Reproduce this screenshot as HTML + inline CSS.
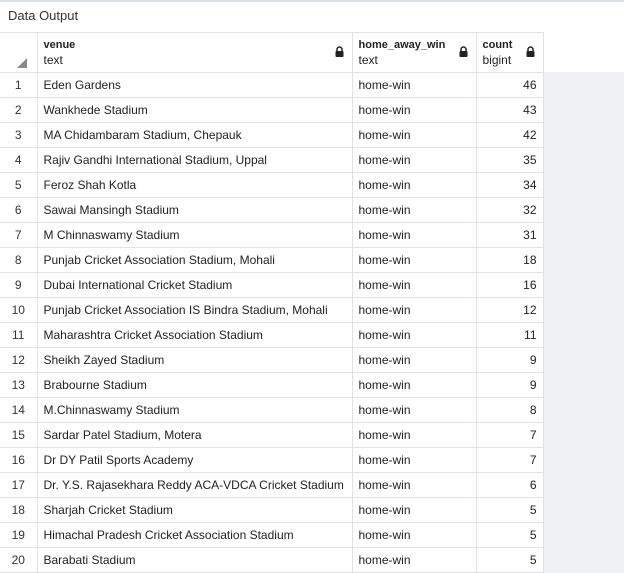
<!DOCTYPE html>
<html><head><style>
body{margin:0;width:624px;height:573px;background:#fff;font-family:"Liberation Sans",sans-serif;font-size:12px;color:#222;overflow:hidden;position:relative}
.top{position:absolute;left:0;top:0;width:624px;height:2px;background:#dde0e6}
.title{position:absolute;left:8px;top:8px;font-size:13px;color:#333}
.gray{position:absolute;left:543px;top:72px;width:81px;height:501px;background:#eef0f4}
table{position:absolute;left:0;top:32px;border-collapse:collapse;table-layout:fixed}
td,th{border:1px solid #dfe2e8;padding:0 6px;white-space:nowrap;overflow:hidden}
th{height:39px;text-align:left;font-weight:normal;vertical-align:middle;position:relative;line-height:15px}
th b{font-weight:bold;font-size:11px;color:#222}
td{height:24px}
td.n{text-align:center;color:#333}
td.c{text-align:right;padding-right:6px}
tr td:first-child,tr th:first-child{border-left:none}
.lock{position:absolute;right:8px;top:15px;width:9px;height:9px}
.tri{position:absolute;left:17px;bottom:4px;width:0;height:0;border-left:10px solid transparent;border-bottom:10px solid #888}
</style></head><body>
<div class="top"></div>
<div class="title">Data Output</div>
<div class="gray"></div>
<table>
<colgroup><col style="width:37px"><col style="width:315px"><col style="width:124px"><col style="width:67px"></colgroup>
<tr><th><div class="tri"></div></th>
<th><b>venue</b><br>text<svg class="lock" viewBox="0 0 9 11" style="height:11px;top:13px"><path d="M2 5V3.5a2.5 2.5 0 0 1 5 0V5" fill="none" stroke="#222" stroke-width="1.5"/><rect x="0.5" y="5" width="8" height="6" rx="1" fill="#222"/></svg></th>
<th><b>home_away_win</b><br>text<svg class="lock" viewBox="0 0 9 11" style="height:11px;top:13px"><path d="M2 5V3.5a2.5 2.5 0 0 1 5 0V5" fill="none" stroke="#222" stroke-width="1.5"/><rect x="0.5" y="5" width="8" height="6" rx="1" fill="#222"/></svg></th>
<th><b>count</b><br>bigint<svg class="lock" viewBox="0 0 9 11" style="height:11px;top:13px"><path d="M2 5V3.5a2.5 2.5 0 0 1 5 0V5" fill="none" stroke="#222" stroke-width="1.5"/><rect x="0.5" y="5" width="8" height="6" rx="1" fill="#222"/></svg></th></tr>
<tr><td class="n">1</td><td>Eden Gardens</td><td>home-win</td><td class="c">46</td></tr>
<tr><td class="n">2</td><td>Wankhede Stadium</td><td>home-win</td><td class="c">43</td></tr>
<tr><td class="n">3</td><td>MA Chidambaram Stadium, Chepauk</td><td>home-win</td><td class="c">42</td></tr>
<tr><td class="n">4</td><td>Rajiv Gandhi International Stadium, Uppal</td><td>home-win</td><td class="c">35</td></tr>
<tr><td class="n">5</td><td>Feroz Shah Kotla</td><td>home-win</td><td class="c">34</td></tr>
<tr><td class="n">6</td><td>Sawai Mansingh Stadium</td><td>home-win</td><td class="c">32</td></tr>
<tr><td class="n">7</td><td>M Chinnaswamy Stadium</td><td>home-win</td><td class="c">31</td></tr>
<tr><td class="n">8</td><td>Punjab Cricket Association Stadium, Mohali</td><td>home-win</td><td class="c">18</td></tr>
<tr><td class="n">9</td><td>Dubai International Cricket Stadium</td><td>home-win</td><td class="c">16</td></tr>
<tr><td class="n">10</td><td>Punjab Cricket Association IS Bindra Stadium, Mohali</td><td>home-win</td><td class="c">12</td></tr>
<tr><td class="n">11</td><td>Maharashtra Cricket Association Stadium</td><td>home-win</td><td class="c">11</td></tr>
<tr><td class="n">12</td><td>Sheikh Zayed Stadium</td><td>home-win</td><td class="c">9</td></tr>
<tr><td class="n">13</td><td>Brabourne Stadium</td><td>home-win</td><td class="c">9</td></tr>
<tr><td class="n">14</td><td>M.Chinnaswamy Stadium</td><td>home-win</td><td class="c">8</td></tr>
<tr><td class="n">15</td><td>Sardar Patel Stadium, Motera</td><td>home-win</td><td class="c">7</td></tr>
<tr><td class="n">16</td><td>Dr DY Patil Sports Academy</td><td>home-win</td><td class="c">7</td></tr>
<tr><td class="n">17</td><td>Dr. Y.S. Rajasekhara Reddy ACA-VDCA Cricket Stadium</td><td>home-win</td><td class="c">6</td></tr>
<tr><td class="n">18</td><td>Sharjah Cricket Stadium</td><td>home-win</td><td class="c">5</td></tr>
<tr><td class="n">19</td><td>Himachal Pradesh Cricket Association Stadium</td><td>home-win</td><td class="c">5</td></tr>
<tr><td class="n">20</td><td>Barabati Stadium</td><td>home-win</td><td class="c">5</td></tr>
</table>
</body></html>
